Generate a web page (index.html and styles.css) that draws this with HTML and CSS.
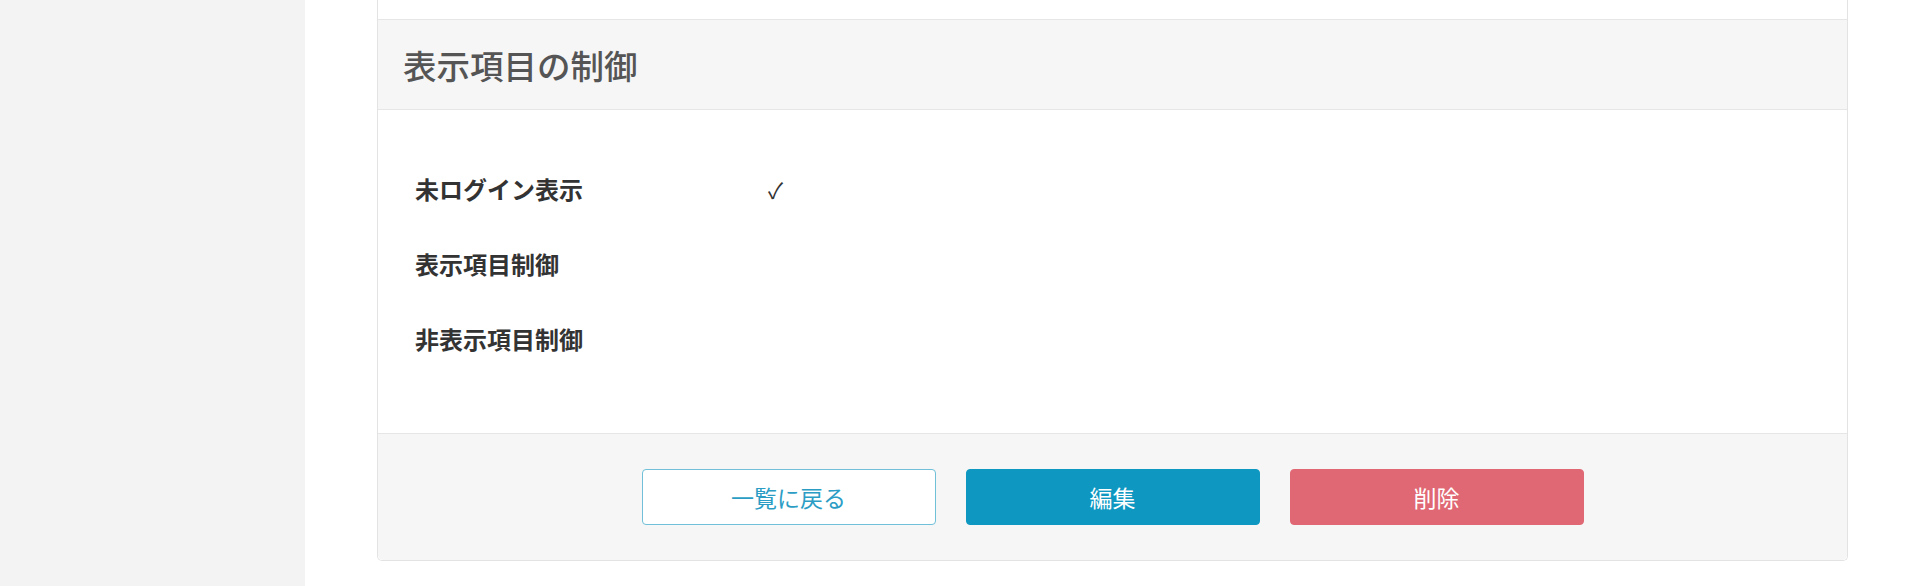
FILE: index.html
```html
<!DOCTYPE html>
<html lang="ja">
<head>
<meta charset="utf-8">
<title>表示項目の制御</title>
<link rel="stylesheet" href="styles.css">
</head>
<body>
<div class="layout">
  <aside class="sidebar"></aside>
  <main class="main">
    <div class="card">
      <div class="card-prev"></div>
      <div class="card-header">
        <h2 class="card-title">表示項目の制御</h2>
      </div>
      <div class="card-body">
        <dl class="detail">
          <div class="detail-row">
            <dt class="detail-label">未ログイン表示</dt>
            <dd class="detail-value">✓</dd>
          </div>
          <div class="detail-row">
            <dt class="detail-label">表示項目制御</dt>
            <dd class="detail-value"></dd>
          </div>
          <div class="detail-row">
            <dt class="detail-label">非表示項目制御</dt>
            <dd class="detail-value"></dd>
          </div>
        </dl>
      </div>
      <div class="card-footer">
        <button class="btn btn-outline" type="button">一覧に戻る</button>
        <button class="btn btn-primary" type="button">編集</button>
        <button class="btn btn-danger" type="button">削除</button>
      </div>
    </div>
  </main>
</div>
</body>
</html>
```

FILE: styles.css
```css
* {
  box-sizing: border-box;
}

html, body {
  margin: 0;
  padding: 0;
  background: #ffffff;
  font-family: "Noto Sans CJK JP", "Noto Sans", sans-serif;
  color: #333333;
}

.layout {
  display: flex;
  height: 586px;
  overflow: hidden;
}

.sidebar {
  width: 305px;
  flex: 0 0 305px;
  background: #f3f3f3;
}

.main {
  flex: 1;
  padding: 0 72px 0 72px;
}

.card {
  border: 1px solid #e3e3e3;
  border-top: none;
  border-radius: 0 0 5px 5px;
  background: #ffffff;
}

.card-prev {
  height: 19px;
  background: #ffffff;
}

.card-header {
  display: flex;
  align-items: center;
  height: 91px;
  padding: 0 25px;
  background: #f6f6f6;
  border-top: 1px solid #e6e6e6;
  border-bottom: 1px solid #e6e6e6;
}

.card-title {
  margin: 0;
  font-size: 33.5px;
  font-weight: 500;
  line-height: 1.2;
  color: #555555;
  padding-top: 2px;
}

.card-body {
  padding: 42px 37px 56px;
}

.detail {
  margin: 0;
  display: flex;
  flex-direction: column;
}

.detail-row {
  display: flex;
  align-items: center;
  height: 75px;
}

.detail-label {
  width: 353px;
  flex: 0 0 353px;
  font-size: 24px;
  font-weight: 700;
  color: #333333;
  line-height: 1.2;
}

.detail-value {
  margin: 0;
  font-size: 22px;
  color: #333333;
  line-height: 1.2;
}

.card-footer {
  display: flex;
  justify-content: center;
  gap: 30px;
  padding: 35px 0 35px;
  background: #f6f6f6;
  border-top: 1px solid #e6e6e6;
  border-radius: 0 0 5px 5px;
}

.btn {
  width: 294px;
  height: 56px;
  border-radius: 4px;
  font-family: "Noto Sans CJK JP", "Noto Sans", sans-serif;
  font-size: 23px;
  font-weight: 400;
  line-height: 1;
  cursor: pointer;
  padding: 0;
}

.btn-outline {
  background: #ffffff;
  border: 1px solid #6fc0d8;
  color: #2b9dc5;
}

.btn-primary {
  background: #0e97c1;
  border: 1px solid #0e97c1;
  color: #ffffff;
}

.btn-danger {
  background: #e06874;
  border: 1px solid #e06874;
  color: #ffffff;
}
```
